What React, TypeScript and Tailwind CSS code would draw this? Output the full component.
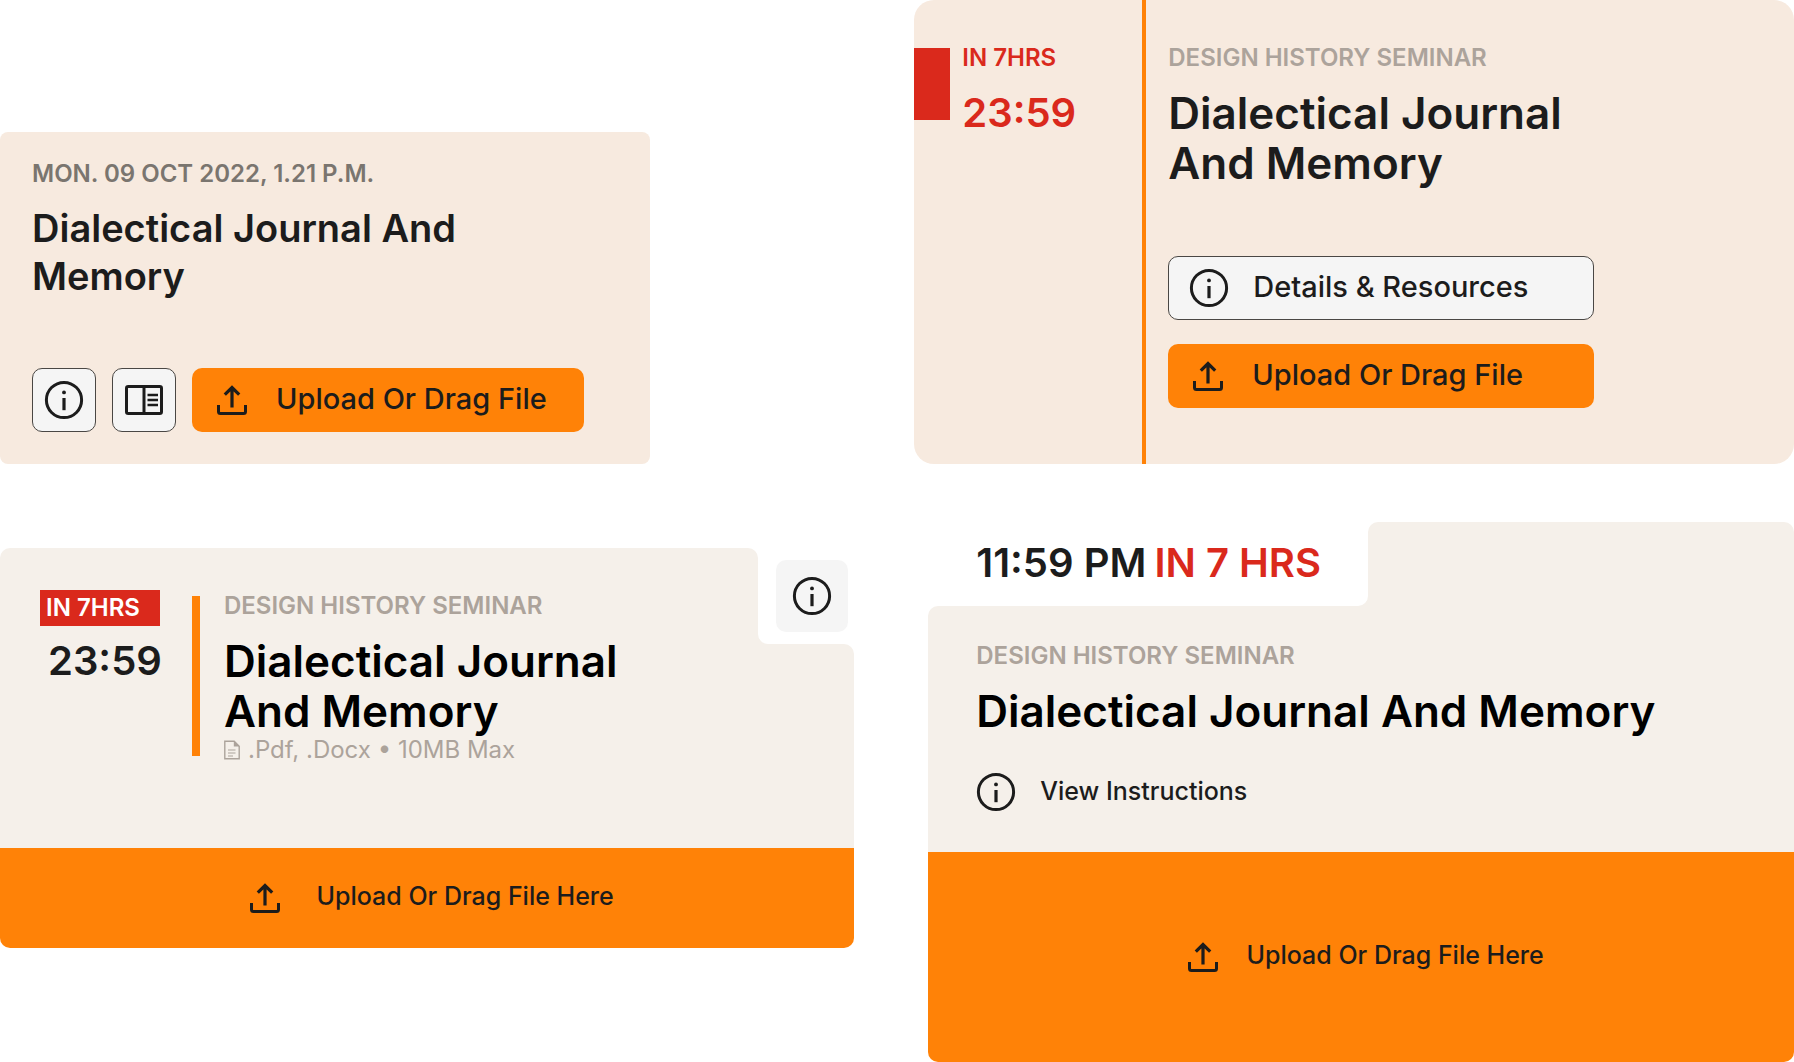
import { clsx } from "clsx";

const course = "Design History Seminar";
const assignment = "Dialectical Journal And Memory";

function InfoIcon() {
  return (
    <svg viewBox="0 0 40 40" className="size-10 shrink-0" fill="none" aria-hidden="true">
      <circle cx="20" cy="20" r="17.6" stroke="currentColor" strokeWidth="3" />
      <circle cx="20" cy="12.4" r="1.9" fill="currentColor" />
      <path d="M20 18v12.2" stroke="currentColor" strokeWidth="3.2" />
    </svg>
  );
}

function ReaderIcon() {
  return (
    <svg viewBox="0 0 40 40" className="size-10 shrink-0" fill="none" aria-hidden="true">
      <rect x="2.5" y="6.5" width="35" height="27" rx="1.8" stroke="currentColor" strokeWidth="3" />
      <path d="M20 6v28" stroke="currentColor" strokeWidth="3" />
      <path d="M23.5 15H34M23.5 20H34M23.5 25H34" stroke="currentColor" strokeWidth="2.6" />
    </svg>
  );
}

function UploadIcon() {
  return (
    <svg viewBox="0 0 40 40" className="size-10 shrink-0" fill="none" aria-hidden="true">
      <path d="M6.5 25v6.5a2 2 0 0 0 2 2h23a2 2 0 0 0 2-2V25" stroke="currentColor" strokeWidth="3" />
      <path d="M20 27.5V7.5M12.8 14.7 20 7.5l7.2 7.2" stroke="currentColor" strokeWidth="3.2" />
    </svg>
  );
}

function FileIcon() {
  return (
    <svg viewBox="0 0 16 20" className="h-5 w-4 shrink-0" fill="none" aria-hidden="true">
      <path d="M.8 1.2h9.4l5 5v12.6H.8z" stroke="currentColor" strokeWidth="1.4" />
      <path d="M9.8 1v5.5h5.4z" fill="currentColor" />
      <path d="M4 10h7.5M4 13h7.5M4 16h5" stroke="currentColor" strokeWidth="1.2" />
    </svg>
  );
}

function Eyebrow({ children, className }: { children: string; className?: string }) {
  return (
    <p className={clsx("text-2xl leading-9 font-semibold uppercase", className)}>{children}</p>
  );
}

function Label({ children }: { children: string }) {
  return <span className="pb-0.5">{children}</span>;
}

const outlined =
  "flex cursor-pointer items-center rounded-[10px] border border-[#4a4744] bg-[#f5f5f5]";

function DateCard() {
  return (
    <article className="w-full max-w-[650px] self-end rounded-lg bg-[#f7eadf] px-8 pt-6 pb-8">
      <Eyebrow className="text-[#7a756f]">Mon. 09 Oct 2022, 1.21 P.M.</Eyebrow>
      <h2 className="mt-3 max-w-[480px] text-[38px] leading-[48px] font-semibold">{assignment}</h2>
      <div className="mt-17 flex gap-4">
        <button type="button" aria-label="Details" className={clsx(outlined, "size-16 justify-center")}>
          <InfoIcon />
        </button>
        <button type="button" aria-label="Reader" className={clsx(outlined, "size-16 justify-center")}>
          <ReaderIcon />
        </button>
        <button
          type="button"
          className="flex h-16 w-[392px] cursor-pointer items-center gap-6 rounded-[10px] bg-[#ff8207] px-5 text-[29px] font-medium"
        >
          <UploadIcon />
          <Label>Upload Or Drag File</Label>
        </button>
      </div>
    </article>
  );
}

function TimelineCard() {
  return (
    <article className="ml-[60px] flex overflow-hidden rounded-[20px] bg-[#f7eadf]">
      <div className="flex w-[228px] shrink-0 gap-3 pt-12 text-[#da291c]">
        <div className="h-[72px] w-9 bg-[#da291c]" />
        <div className="-mt-2">
          <Eyebrow>In 7hrs</Eyebrow>
          <p className="mt-3 text-[40px] leading-[50px] font-semibold">23:59</p>
        </div>
      </div>
      <div className="w-1 shrink-0 bg-[#ff8207]" />
      <div className="flex-1 px-[22px] pt-10 pb-14">
        <Eyebrow className="text-[#aca39b]">{course}</Eyebrow>
        <h2 className="mt-3 max-w-[440px] text-[44px] leading-[50px] font-semibold">{assignment}</h2>
        <div className="mt-17 flex max-w-[426px] flex-col gap-6 text-[29px] font-medium">
          <button type="button" className={clsx(outlined, "h-16 gap-6 px-5")}>
            <InfoIcon />
            <Label>Details &amp; Resources</Label>
          </button>
          <button
            type="button"
            className="flex h-16 cursor-pointer items-center gap-6 rounded-[10px] bg-[#ff8207] px-5"
          >
            <UploadIcon />
            <Label>Upload Or Drag File</Label>
          </button>
        </div>
      </div>
    </article>
  );
}

function NotchedCard() {
  return (
    <article className="mt-[26px] self-start">
      <div className="flex">
        <div className="flex min-h-[300px] flex-1 rounded-t-[10px] bg-[#f5f0ea] pt-10 pl-10">
          <div className="w-[152px] shrink-0">
            <Eyebrow className="mt-[2px] w-[120px] bg-[#da291c] px-[6px] text-white">In 7hrs</Eyebrow>
            <p className="mt-[10px] pl-2 text-[40px] leading-[50px] font-semibold">23:59</p>
          </div>
          <div className="mt-2 h-40 w-2 shrink-0 bg-[#ff8207]" />
          <div className="pl-6">
            <Eyebrow className="text-[#aca39b]">{course}</Eyebrow>
            <h2 className="mt-3 max-w-[440px] text-[44px] leading-[50px] font-semibold text-black">
              {assignment}
            </h2>
            <p className="flex items-center gap-2 text-2xl leading-7 text-[#aca39b]">
              <FileIcon />
              .Pdf, .Docx • 10MB Max
            </p>
          </div>
        </div>
        <div className="flex w-24 shrink-0 flex-col">
          <div className="h-24 bg-[#f5f0ea]">
            <div className="flex h-full items-center justify-end rounded-bl-[10px] bg-white pr-[6px]">
              <button
                type="button"
                aria-label="Details"
                className="flex size-[72px] cursor-pointer items-center justify-center rounded-[10px] bg-[#f5f5f5]"
              >
                <InfoIcon />
              </button>
            </div>
          </div>
          <div className="flex-1 rounded-tr-[10px] bg-[#f5f0ea]" />
        </div>
      </div>
      <button
        type="button"
        className="flex h-[100px] w-full cursor-pointer items-center justify-center gap-8 rounded-b-[10px] bg-[#ff8207] pl-1 text-[25px] font-medium"
      >
        <UploadIcon />
        <Label>Upload Or Drag File Here</Label>
      </button>
    </article>
  );
}

function FolderCard() {
  return (
    <article className="ml-[74px]">
      <div className="flex h-[84px]">
        <div className="w-[440px] shrink-0 bg-[#f5f0ea]">
          <p className="flex h-full gap-2 rounded-br-[10px] bg-white pt-4 pl-12 text-[40px] leading-[50px] font-semibold whitespace-nowrap">
            <span>11:59 PM</span>
            <span className="text-[#da291c]">IN 7 HRS</span>
          </p>
        </div>
        <div className="flex-1 rounded-t-[10px] bg-[#f5f0ea]" />
      </div>
      <div className="rounded-tl-[10px] bg-[#f5f0ea] px-12 pt-8 pb-10">
        <Eyebrow className="text-[#aca39b]">{course}</Eyebrow>
        <h2 className="mt-3 text-[44px] leading-[50px] font-semibold text-black">{assignment}</h2>
        <a href="#instructions" className="mt-9 flex items-center gap-6 text-[25px] leading-8 font-medium">
          <InfoIcon />
          <Label>View Instructions</Label>
        </a>
      </div>
      <button
        type="button"
        className="flex h-[210px] w-full cursor-pointer items-center justify-center gap-6 rounded-b-[10px] bg-[#ff8207] pl-1 text-[25px] font-medium"
      >
        <UploadIcon />
        <Label>Upload Or Drag File Here</Label>
      </button>
    </article>
  );
}

export default function App() {
  return (
    <main className="grid grid-cols-[1fr_1.1fr] gap-y-[58px] bg-white font-['Inter',sans-serif] text-[#1c1c1c]">
      <DateCard />
      <TimelineCard />
      <NotchedCard />
      <FolderCard />
    </main>
  );
}
